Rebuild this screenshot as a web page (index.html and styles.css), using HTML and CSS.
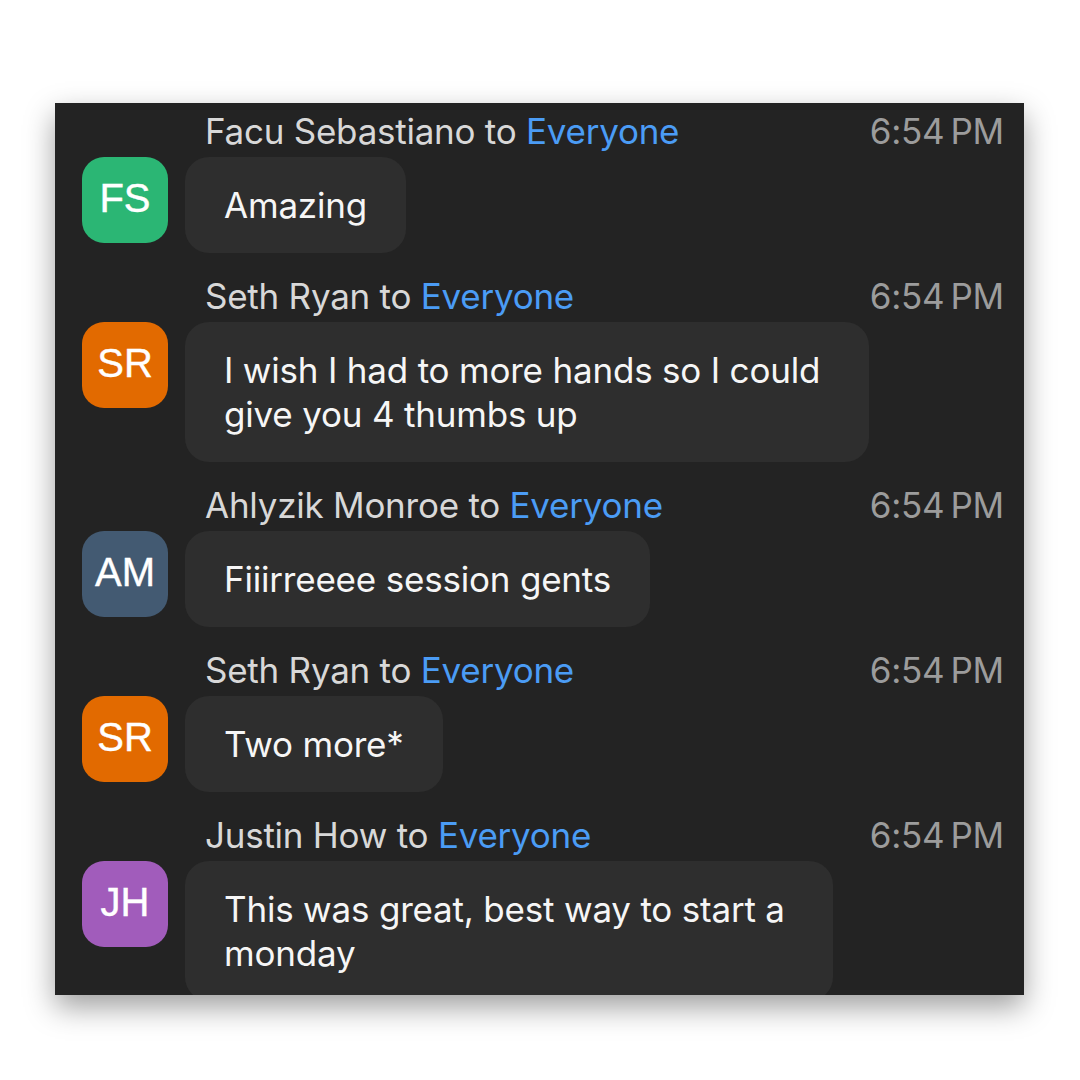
FILE: index.html
```html
<!DOCTYPE html>
<html>
<head>
<meta charset="utf-8">
<link rel="stylesheet" href="styles.css">
</head>
<body>
<div class="panel">
  <div class="msg">
    <div class="head"><span class="who">Facu Sebastiano to <span class="to">Everyone</span></span><span class="time">6:54&#8239;PM</span></div>
    <div class="avatar fs">FS</div>
    <div class="bubble">Amazing</div>
  </div>
  <div class="msg">
    <div class="head"><span class="who">Seth Ryan to <span class="to">Everyone</span></span><span class="time">6:54&#8239;PM</span></div>
    <div class="avatar sr">SR</div>
    <div class="bubble">I wish I had to more hands so I could&nbsp;<br>give you 4 thumbs up</div>
  </div>
  <div class="msg">
    <div class="head"><span class="who">Ahlyzik Monroe to <span class="to">Everyone</span></span><span class="time">6:54&#8239;PM</span></div>
    <div class="avatar am">AM</div>
    <div class="bubble">Fiiirreeee session gents</div>
  </div>
  <div class="msg">
    <div class="head"><span class="who">Seth Ryan to <span class="to">Everyone</span></span><span class="time">6:54&#8239;PM</span></div>
    <div class="avatar sr">SR</div>
    <div class="bubble">Two more*</div>
  </div>
  <div class="msg">
    <div class="head"><span class="who">Justin How to <span class="to">Everyone</span></span><span class="time">6:54&#8239;PM</span></div>
    <div class="avatar jh">JH</div>
    <div class="bubble">This was great, best way to start a&nbsp;<br>monday</div>
  </div>
</div>
</body>
</html>
```
FILE: styles.css
```css
html, body {
  margin: 0;
  padding: 0;
  background: #ffffff;
}
body {
  width: 1080px;
  height: 1080px;
  overflow: hidden;
  font-family: Inter, "Noto Sans", sans-serif;
}
.panel {
  margin: 103px 0 0 55px;
  width: 969px;
  height: 892px;
  box-sizing: border-box;
  padding-top: 8px;
  background: #232323;
  overflow: hidden;
  box-shadow: 0 12px 28px rgba(0, 0, 0, 0.38);
  display: flex;
  flex-direction: column;
  gap: 23px;
}
.msg {
  display: grid;
  grid-template-columns: 86px 1fr;
  column-gap: 17px;
  row-gap: 6px;
  padding-left: 27px;
}
.head {
  grid-column: 2;
  display: flex;
  justify-content: space-between;
  align-items: center;
  height: 40px;
  padding: 0 20px;
  font-size: 35px;
  letter-spacing: -0.25px;
}
.who { color: #d8d8d8; }
.to { color: #4b9cf5; }
.time { color: #9c9c9c; }
.avatar {
  grid-column: 1;
  width: 86px;
  height: 86px;
  border-radius: 22px;
  display: flex;
  align-items: center;
  justify-content: center;
  color: #ffffff;
  font-size: 40px;
  font-family: "Liberation Sans", Arial, sans-serif;
  padding-bottom: 3px;
  box-sizing: border-box;
  -webkit-text-stroke: 0.4px #ffffff;
}
.fs { background: #2bb674; }
.sr { background: #e26a00; }
.am { background: #435a72; }
.jh { background: #a15cbb; }
.bubble {
  grid-column: 2;
  justify-self: start;
  white-space: nowrap;
  background: #2e2e2e;
  border-radius: 24px;
  padding: 26px 39px;
  font-size: 35px;
  line-height: 44px;
  color: #f6f6f6;
  letter-spacing: -0.2px;
}
```
